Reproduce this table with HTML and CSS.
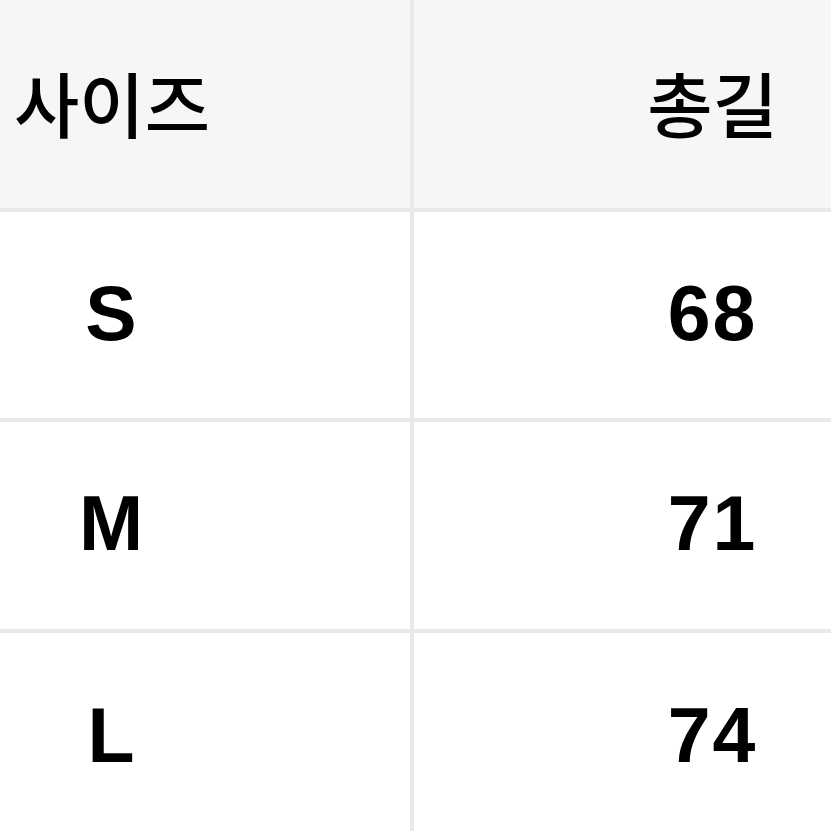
FILE: index.html
```html
<!DOCTYPE html>
<html lang="ko">
<head>
<meta charset="utf-8">
<title>사이즈표</title>
<link rel="stylesheet" href="styles.css">
</head>
<body>
<div class="table">
  <div class="cell head c1"><span class="label">사이즈</span></div>
  <div class="cell head c2"><span class="label">총길</span></div>
  <div class="cell c1"><span class="val">S</span></div>
  <div class="cell c2"><span class="val">68</span></div>
  <div class="cell c1"><span class="val">M</span></div>
  <div class="cell c2"><span class="val">71</span></div>
  <div class="cell c1"><span class="val">L</span></div>
  <div class="cell c2"><span class="val">74</span></div>
</div>
</body>
</html>
```

FILE: styles.css
```css
html, body {
  margin: 0;
  padding: 0;
  background: #ffffff;
  overflow: hidden;
}
.table {
  width: 831px;
  height: 841px;
  display: grid;
  grid-template-columns: 410px 1fr;
  grid-template-rows: 208px 206px 207px 208px;
  gap: 4px;
  background: #e9e9e9;
  border-top: 2px solid #eeeeee;
  box-sizing: border-box;
  margin-top: -2px;
}
.cell {
  background: #ffffff;
  display: flex;
  align-items: center;
  justify-content: center;
  color: #000000;
}
.cell.head {
  background: #f6f6f6;
  padding-bottom: 6px;
}
.c1 {
  padding-right: 186px;
}
.c2 {
  padding-left: 180px;
}
.label {
  font-family: "Noto Sans CJK KR", "Noto Sans", sans-serif;
  font-weight: 500;
  font-size: 71px;
  line-height: 1;
}
.val {
  font-family: "Liberation Sans", Arial, sans-serif;
  font-weight: 700;
  font-size: 77px;
  line-height: 1;
  letter-spacing: 2px;
  padding-bottom: 4px;
}
```
